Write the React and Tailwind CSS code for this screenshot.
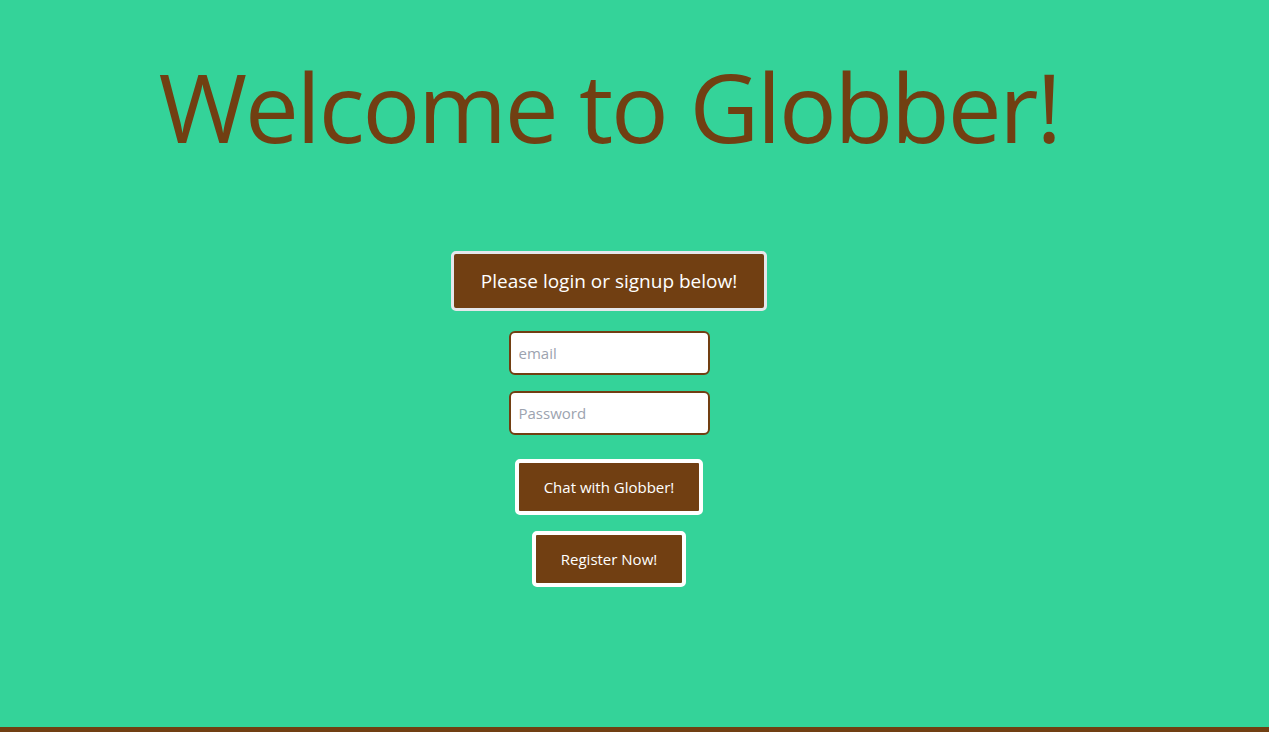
import React from "react";

const App = () => {
  return (
    <div className="min-h-screen bg-[#34d399] flex flex-col font-['Open_Sans',sans-serif]">
      <main className="flex-1 flex flex-col items-center pr-[51px]">
        <h1 className="mt-[50px] text-[96px] leading-[112px] font-normal text-[#713f12] tracking-[-2.2px]">
          Welcome to Globber!
        </h1>

        <div className="mt-[89px] border-[3px] border-[#e5e7eb] rounded-[5px] bg-[#713f12] h-[60px] px-[27px] flex items-center text-white text-[19px]">
          Please login or signup below!
        </div>

        <form className="flex flex-col items-center mt-[20px]" onSubmit={(e) => e.preventDefault()}>
          <input
            type="email"
            placeholder="email"
            className="w-[201px] h-[44px] bg-white border-2 border-[#713f12] rounded-[6px] px-[8px] text-[15px] placeholder:text-[#9ca3af] outline-none"
          />
          <input
            type="password"
            placeholder="Password"
            className="mt-[16px] w-[201px] h-[44px] bg-white border-2 border-[#713f12] rounded-[6px] px-[8px] text-[15px] placeholder:text-[#9ca3af] outline-none"
          />
          <button className="mt-[24px] w-[188px] h-[56px] bg-[#713f12] border-4 border-white rounded-[5px] text-white text-[15px]">
            Chat with Globber!
          </button>
          <button className="mt-[16px] w-[154px] h-[56px] bg-[#713f12] border-4 border-white rounded-[5px] text-white text-[15px]">
            Register Now!
          </button>
        </form>
      </main>
      <footer className="h-[5px] bg-[#713f12]" />
    </div>
  );
};

export default App;
